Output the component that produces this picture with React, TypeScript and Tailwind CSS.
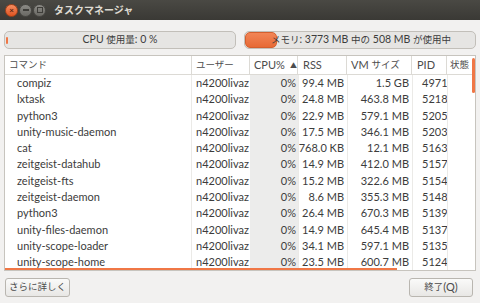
import React from "react";

const rows: [string, string, string, string][] = [
  ["compiz", "99.4 MB", "1.5 GB", "4971"],
  ["lxtask", "24.8 MB", "463.8 MB", "5218"],
  ["python3", "22.9 MB", "579.1 MB", "5205"],
  ["unity-music-daemon", "17.5 MB", "346.1 MB", "5203"],
  ["cat", "768.0 KB", "12.1 MB", "5163"],
  ["zeitgeist-datahub", "14.9 MB", "412.0 MB", "5157"],
  ["zeitgeist-fts", "15.2 MB", "322.6 MB", "5154"],
  ["zeitgeist-daemon", "8.6 MB", "355.3 MB", "5148"],
  ["python3", "26.4 MB", "670.3 MB", "5139"],
  ["unity-files-daemon", "14.9 MB", "645.4 MB", "5137"],
  ["unity-scope-loader", "34.1 MB", "597.1 MB", "5135"],
  ["unity-scope-home", "23.5 MB", "600.7 MB", "5124"],
];

const font = { fontFamily: 'Lato, "Noto Sans CJK JP", sans-serif' };

function J({ children }: { children: React.ReactNode }) {
  return <span className="text-[9.5px]">{children}</span>;
}

export default function App() {
  return (
    <div className="w-[480px] h-[303px] bg-[#f2f1f0] flex flex-col overflow-hidden text-[#3c3c3c]" style={font}>
      {/* title bar */}
      <div className="h-[20px] bg-gradient-to-b from-[#4a4944] to-[#3a3935] flex items-center pl-[5px] shrink-0">
        <div className="w-[13px] h-[13px] rounded-full bg-gradient-to-b from-[#f58c5f] to-[#e0531e] border border-[#a8431a] flex items-center justify-center text-[8px] leading-none text-[#5a2410] font-bold">×</div>
        <div className="ml-[1px] w-[13px] h-[13px] rounded-full bg-gradient-to-b from-[#8b8a85] to-[#6a6964] border border-[#4a4945] flex items-center justify-center">
          <div className="w-[6px] h-[2px] bg-[#3e3d39]" />
        </div>
        <div className="ml-[1px] w-[13px] h-[13px] rounded-full bg-gradient-to-b from-[#8b8a85] to-[#6a6964] border border-[#4a4945] flex items-center justify-center">
          <div className="w-[6px] h-[6px] border border-[#3e3d39]" />
        </div>
        <div className="ml-[8px] text-[10px] font-bold text-[#dfdbd2] leading-none">タスクマネージャ</div>
      </div>

      {/* bars */}
      <div className="flex gap-[8px] px-[4px] pt-[11px] shrink-0 text-[10.5px]">
        <div className="w-[232px] h-[18px] rounded-[5px] border border-[#c2bfb9] bg-[#e6e5e3] relative flex items-center justify-center whitespace-pre">
          <div className="absolute left-[1px] top-[5px] w-[2px] h-[7px] rounded-full bg-[#f07746]" />
          CPU <J>使用量</J>: 0 %
        </div>
        <div className="w-[232px] h-[18px] rounded-[5px] border border-[#c2bfb9] bg-[#e6e5e3] relative flex items-center justify-center whitespace-pre">
          <div className="absolute left-0 top-0 bottom-0 w-[32px] rounded-[5px] bg-gradient-to-b from-[#f28556] to-[#e76a35] border border-[#d55f2e]" />
          <span className="relative ml-[2px]"><J>メモリ</J>: 3773 MB <J>中の</J> 508 MB <J>が使用中</J></span>
        </div>
      </div>

      {/* table */}
      <div className="mx-[4px] mt-[6px] h-[216px] border border-[#c7c4be] bg-white relative overflow-hidden shrink-0 text-[11px]">
        <div className="flex h-[19px] border-b border-[#dcdad5] text-[#4c4c4c] whitespace-pre">
          <div className="w-[187px] pl-[4px] border-r border-[#dcdad5] flex items-center"><J>コマンド</J></div>
          <div className="w-[58px] pl-[4px] border-r border-[#dcdad5] flex items-center"><J>ユーザー</J></div>
          <div className="w-[48px] pl-[4px] border-r border-[#dcdad5] flex items-center">CPU%<span className="ml-[5px] text-[7px]">▲</span></div>
          <div className="w-[49px] pl-[5px] border-r border-[#dcdad5] flex items-center">RSS</div>
          <div className="w-[65px] pl-[4px] border-r border-[#dcdad5] flex items-center">VM <J>サイズ</J></div>
          <div className="w-[35px] pl-[5px] border-r border-[#dcdad5] flex items-center">PID</div>
          <div className="w-[28px] pl-[3px] flex items-center whitespace-nowrap overflow-hidden"><J>状態</J></div>
        </div>
        <div className="flex flex-col">
          {rows.map((r, i) => (
            <div key={i} className="flex h-[16.3px] items-center whitespace-nowrap">
              <div className="w-[187px] pl-[12px]">{r[0]}</div>
              <div className="w-[58px] pl-[4px] overflow-hidden">n4200livaz</div>
              <div className="w-[48px] h-full bg-[#ececeb] pr-[2px] flex items-center justify-end">0%</div>
              <div className="w-[49px] pr-[3px] text-right">{r[1]}</div>
              <div className="w-[65px] pr-[3px] text-right">{r[2]}</div>
              <div className="w-[35px] pl-[10px]">{r[3]}</div>
              <div className="w-[28px]" />
            </div>
          ))}
        </div>
        {/* column separators in body */}
        <div className="absolute top-[19px] bottom-0 left-[186px] w-px bg-[#ebeae7]" />
        <div className="absolute top-[19px] bottom-0 left-[293px] w-px bg-[#ebeae7]" />
        <div className="absolute top-[19px] bottom-0 left-[342px] w-px bg-[#ebeae7]" />
        <div className="absolute top-[19px] bottom-0 left-[407px] w-px bg-[#ebeae7]" />
        <div className="absolute top-[19px] bottom-0 left-[442px] w-px bg-[#ebeae7]" />
        {/* scrollbars */}
        <div className="absolute right-[0px] top-[2px] w-[3px] h-[35px] bg-[#f07746] rounded-full" />
        <div className="absolute left-0 bottom-0 w-[392px] h-[2px] bg-[#f07746]" />
      </div>

      {/* buttons */}
      <div className="flex justify-between px-[5px] mt-[7px]">
        <button className="w-[65px] h-[19px] rounded-[3px] border border-[#b9b6b0] bg-gradient-to-b from-[#fafaf9] to-[#e8e7e5] text-[9.5px] text-[#4c4c4c] flex items-center justify-center whitespace-nowrap">さらに詳しく</button>
        <button className="w-[64px] h-[19px] rounded-[3px] border border-[#b9b6b0] bg-gradient-to-b from-[#fafaf9] to-[#e8e7e5] text-[11px] text-[#4c4c4c] flex items-center justify-center mr-[2px] whitespace-nowrap"><J>終了</J>(Q)</button>
      </div>
    </div>
  );
}
